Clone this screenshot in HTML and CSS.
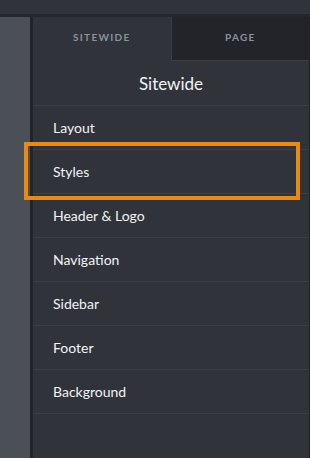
FILE: index.html
```html
<!DOCTYPE html>
<html lang="en">
<head>
    <meta charset="UTF-8">
    <title>Sitewide Settings</title>
    <link rel="stylesheet" href="styles.css">
</head>
<body>
    <div class="topbar"></div>
    <div class="main">
        <div class="strip"></div>
        <div class="panel">
            <div class="tabs">
                <div class="tab active">SITEWIDE</div>
                <div class="tab">PAGE</div>
            </div>
            <div class="title">Sitewide</div>
            <ul class="menu">
                <li>Layout</li>
                <li>Styles</li>
                <li>Header &amp; Logo</li>
                <li>Navigation</li>
                <li>Sidebar</li>
                <li>Footer</li>
                <li>Background</li>
            </ul>
        </div>
    </div>
    <div class="highlight"></div>
</body>
</html>
```

FILE: styles.css
```css
body {
    margin: 0;
    height: 458px;
    overflow: hidden;
    background-color: #30333a;
    font-family: Lato, "Open Sans", sans-serif;
    color: #f2f3f5;
    display: flex;
    flex-direction: column;
}
.topbar {
    height: 14px;
    background-color: #30333a;
    border-bottom: 3px solid #24262a;
}
.main {
    flex: 1;
    display: flex;
}
.strip {
    width: 30px;
    background-color: #4b4f56;
    border-right: 3px solid #222428;
}
.panel {
    flex: 1;
    background-color: #30333a;
    border-right: 1px solid #1e2024;
}
.tabs {
    display: flex;
    height: 44px;
}
.tab {
    flex: 1;
    display: flex;
    align-items: center;
    justify-content: center;
    box-sizing: border-box;
    padding-bottom: 4px;
    font-size: 10px;
    font-weight: bold;
    letter-spacing: 1.3px;
    color: #8a929c;
    background-color: #222429;
    border-left: 1px solid #3a3d44;
    border-bottom: 1px solid #3a3d44;
}
.tab.active {
    background-color: #30333a;
    border: none;
}
.title {
    height: 44px;
    display: flex;
    align-items: center;
    justify-content: center;
    font-size: 17px;
    border-bottom: 1px solid #3b3e45;
}
.menu {
    list-style: none;
    margin: 0;
    padding: 0;
}
.menu li {
    height: 43px;
    display: flex;
    align-items: center;
    padding-left: 20px;
    font-size: 14px;
    border-bottom: 1px solid #3b3e45;
}
.highlight {
    position: absolute;
    left: 24px;
    top: 142px;
    width: 268px;
    height: 50px;
    border: 4px solid #ec8a0c;
}
```
